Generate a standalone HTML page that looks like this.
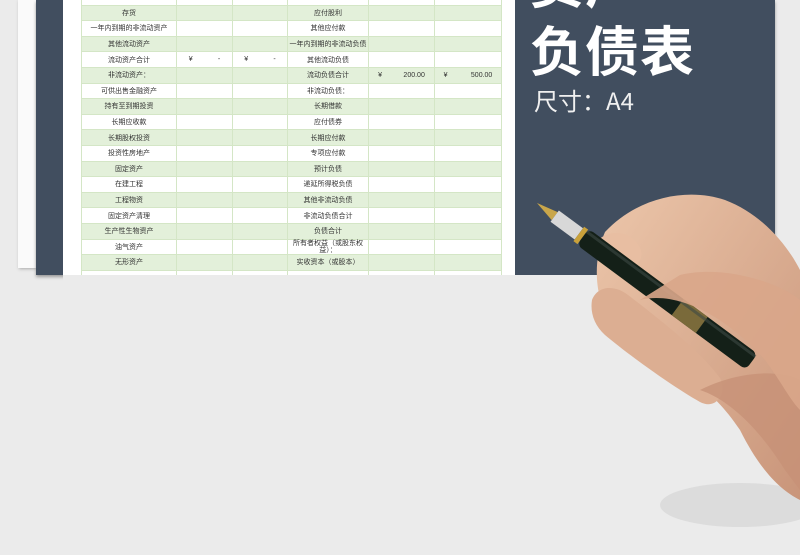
<!DOCTYPE html>
<html><head><meta charset="utf-8"><style>
body{margin:0;width:800px;height:555px;background:#ebebeb;position:relative;overflow:hidden;font-family:"Liberation Sans","Noto Sans CJK SC",sans-serif}
.paper{position:absolute;left:18px;top:0;width:20px;height:268px;background:#fafafa;box-shadow:1px 1px 3px #aaa}
.dark{position:absolute;left:36px;top:0;width:739px;height:275px;background:#414e5f;box-shadow:0 2px 3px #999}
.sheet{position:absolute;left:63px;top:0;width:452px;height:275px;background:#fff}
table{position:absolute;left:81px;top:-11px;border-collapse:collapse;font-size:7px;color:#333}
td{height:14.6px;border:1px solid #d4e6c6;padding:0;text-align:center;white-space:nowrap}
tr:nth-child(even) td{background:#e3f0da}
.t1{position:absolute;left:530px;top:4px;color:#fff;font-size:54px;font-weight:bold;font-family:"Noto Sans CJK SC",sans-serif;letter-spacing:1px;line-height:64px}
.t2{position:absolute;left:534px;top:82px;color:#f0f0f0;font-size:24px;font-family:"Noto Sans CJK SC",sans-serif}
</style></head><body>
<div class="paper"></div>
<div class="dark"></div>
<div class="sheet"></div>
<table>
<colgroup><col style="width:95px"><col style="width:56px"><col style="width:55px"><col style="width:81px"><col style="width:66px"><col style="width:67px"></colgroup>
<tr><td></td><td></td><td></td><td></td><td></td><td></td></tr>
<tr><td>存货</td><td></td><td></td><td>应付股利</td><td></td><td></td></tr>
<tr><td>一年内到期的非流动资产</td><td></td><td></td><td>其他应付款</td><td></td><td></td></tr>
<tr><td>其他流动资产</td><td></td><td></td><td>一年内到期的非流动负债</td><td></td><td></td></tr>
<tr><td>流动资产合计</td><td>¥ &nbsp; &nbsp; &nbsp; &nbsp; &nbsp; &nbsp; -</td><td>¥ &nbsp; &nbsp; &nbsp; &nbsp; &nbsp; &nbsp; -</td><td>其他流动负债</td><td></td><td></td></tr>
<tr><td>非流动资产：</td><td></td><td></td><td>流动负债合计</td><td>¥ &nbsp; &nbsp; &nbsp; &nbsp; &nbsp; 200.00</td><td>¥ &nbsp; &nbsp; &nbsp; &nbsp; &nbsp; &nbsp;500.00</td></tr>
<tr><td>可供出售金融资产</td><td></td><td></td><td>非流动负债：</td><td></td><td></td></tr>
<tr><td>持有至到期投资</td><td></td><td></td><td>长期借款</td><td></td><td></td></tr>
<tr><td>长期应收款</td><td></td><td></td><td>应付债券</td><td></td><td></td></tr>
<tr><td>长期股权投资</td><td></td><td></td><td>长期应付款</td><td></td><td></td></tr>
<tr><td>投资性房地产</td><td></td><td></td><td>专项应付款</td><td></td><td></td></tr>
<tr><td>固定资产</td><td></td><td></td><td>预计负债</td><td></td><td></td></tr>
<tr><td>在建工程</td><td></td><td></td><td>递延所得税负债</td><td></td><td></td></tr>
<tr><td>工程物资</td><td></td><td></td><td>其他非流动负债</td><td></td><td></td></tr>
<tr><td>固定资产清理</td><td></td><td></td><td>非流动负债合计</td><td></td><td></td></tr>
<tr><td>生产性生物资产</td><td></td><td></td><td>负债合计</td><td></td><td></td></tr>
<tr><td>油气资产</td><td></td><td></td><td style="line-height:7px">所有者权益（或股东权<br>益）：</td><td></td><td></td></tr>
<tr><td>无形资产</td><td></td><td></td><td>实收资本（或股本）</td><td></td><td></td></tr>
<tr><td></td><td></td><td></td><td></td><td></td><td></td></tr>
</table>
<div style="position:absolute;left:63px;top:275px;width:740px;height:280px;background:#ebebeb"></div>
<div style="position:absolute;left:0;top:0;width:800px;height:275px;overflow:hidden;pointer-events:none">
<div class="t1" style="top:-52px">资产</div>
<div class="t1" style="top:16px">负债表</div>
</div>
<div class="t2">尺寸：A4</div>
<svg width="800" height="555" style="position:absolute;left:0;top:0">
<defs><linearGradient id="sk" x1="0" y1="0" x2="1" y2="1"><stop offset="0" stop-color="#ecc6aa"/><stop offset="1" stop-color="#c9957a"/></linearGradient></defs>
<ellipse cx="740" cy="505" rx="80" ry="22" fill="#d8d8d8" opacity="0.8"/>
<path d="M605 232 C640 195 690 188 725 200 C765 215 790 250 800 270 L800 500 C780 490 760 470 740 430 C720 400 700 385 680 370 C650 350 625 335 610 320 C595 300 592 260 605 232 Z" fill="url(#sk)"/>
<path d="M598 240 C612 228 632 232 640 248 C646 262 632 272 615 268 C600 264 592 252 598 240Z" fill="#e8bea2"/>
<path d="M592 300 C598 285 615 285 628 295 C650 312 700 350 720 378 C728 395 715 410 700 402 C670 385 625 352 605 335 C594 325 590 312 592 300Z" fill="#dcae92"/>
<path d="M700 390 C730 400 760 430 785 470 L800 490 L800 380 C780 370 740 370 700 390Z" fill="#c79177" opacity=".8"/>
<g transform="translate(537,203) rotate(36.5)">
<polygon points="0,0 22,-5 22,5" fill="#c9a64a"/>
<rect x="22" y="-7" width="30" height="14" fill="#d8d8d8"/>
<rect x="52" y="-9" width="5" height="18" fill="#c9a13a"/>
<rect x="57" y="-10" width="210" height="20" rx="6" fill="#142018"/>
<rect x="175" y="-10" width="30" height="20" fill="#7a6a3a"/>
<rect x="57" y="-8" width="210" height="3" fill="#3c4a44" opacity=".6"/>
</g>
<path d="M640 300 C680 290 730 320 765 360 C780 380 790 400 800 410 L800 300 C775 280 720 265 680 275 Z" fill="#d9a68a" opacity="0.9"/>
</svg>
</body></html>
